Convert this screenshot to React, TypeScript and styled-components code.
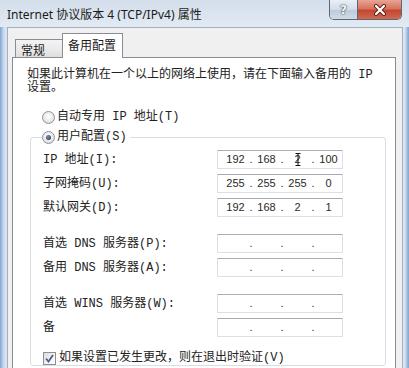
import styled, { createGlobalStyle } from "styled-components";

const SONG = `"Liberation Mono", "Noto Sans CJK SC", monospace`;
const UI = `"Noto Sans", "Noto Sans CJK SC", sans-serif`;
const NUM = `"Liberation Sans", Arial, sans-serif`;

const GlobalStyle = createGlobalStyle`
  html, body {
    margin: 0;
    padding: 0;
    background: #dbe5f1;
  }
  body {
    width: 409px;
    height: 368px;
    overflow: hidden;
  }
`;

const Window = styled.div`
  width: 409px;
  height: 368px;
  display: flex;
  flex-direction: column;
  overflow: hidden;
  background: #dbe5f1;
`;

const TitleBar = styled.div`
  height: 27px;
  flex-shrink: 0;
  display: flex;
  align-items: flex-start;
  padding: 0 7px;
  background: linear-gradient(180deg, #d3deeb 0%, #e2eaf3 100%);
`;

const TitleText = styled.div`
  margin-top: 6px;
  font-family: ${UI};
  font-size: 12px;
  line-height: 18px;
  color: #1b1b1b;
`;

const CaptionButtons = styled.div`
  margin-left: auto;
  display: flex;
  height: 19px;
  border: 1px solid #5d6877;
  border-top: none;
  border-radius: 0 0 5px 5px;
  overflow: hidden;
`;

const HelpButton = styled.div`
  width: 27px;
  display: flex;
  align-items: center;
  justify-content: center;
  border-right: 1px solid #5d6877;
  background: linear-gradient(180deg, #e9eff6 0%, #d2dce8 50%, #bccadb 51%, #d0dbe8 100%);
  font-family: "DejaVu Sans", sans-serif;
  font-weight: bold;
  font-size: 12px;
  color: #f4f6f9;
  text-shadow: 0 0 1px #2c3748, 0 0 2px #3a4658;
`;

const CloseButton = styled.div`
  width: 43px;
  display: flex;
  align-items: center;
  justify-content: center;
  background: linear-gradient(180deg, #e8a597 0%, #d8735f 45%, #c4462f 55%, #d06a52 100%);
`;

const Main = styled.div`
  flex: 1;
  display: flex;
  min-height: 0;
`;

const FrameLeft = styled.div`
  width: 7px;
  flex-shrink: 0;
  background: linear-gradient(90deg, #7fa3cf 0, #a7c3e2 2px, #cfdced 4px, #dce6f1 7px);
`;

const FrameRight = styled.div`
  width: 6px;
  flex-shrink: 0;
  background: linear-gradient(90deg, #e2eaf3 0, #d5e1ef 2px, #a4c0e0 4px, #7fa2cf 6px);
`;

const Body = styled.div`
  flex: 1;
  display: flex;
  flex-direction: column;
  background: #f0f0f0;
  border: 1px solid #a4b0c0;
  border-bottom: none;
  padding: 5px 6px 0 4px;
  min-width: 0;
`;

const TabStrip = styled.div`
  display: flex;
  align-items: flex-end;
  height: 25px;
  padding-left: 3px;
  margin-bottom: -1px;
  position: relative;
  z-index: 1;
`;

const Tab = styled.div<{ $active?: boolean }>`
  box-sizing: border-box;
  font-family: ${UI};
  font-size: 12px;
  color: #1b1b1b;
  border: 1px solid #898c95;
  border-bottom: none;
  display: flex;
  align-items: center;
  ${(p) =>
    p.$active
      ? `
    height: 25px;
    padding: 0 6px 2px 5px;
    background: #fff;
  `
      : `
    height: 18px;
    margin-bottom: 1px;
    padding: 2px 17px 0 5px;
    border-right: none;
    background: linear-gradient(180deg, #f3f3f3 0%, #ebebeb 50%, #dedede 100%);
  `}
`;

const Panel = styled.div`
  flex: 1;
  background: #fff;
  border: 1px solid #898c95;
  border-bottom: none;
  padding: 11px 9px 0 14px;
  font-family: ${SONG};
  font-size: 12px;
  color: #222;
`;

const Description = styled.div`
  line-height: 13px;
`;

const RadioRow = styled.div`
  display: flex;
  align-items: center;
  gap: 2px;
  height: 14px;
  line-height: 14px;
  margin: 15px 0 0 15px;
`;

const Radio = styled.span<{ $on?: boolean }>`
  width: 13px;
  height: 13px;
  box-sizing: border-box;
  flex-shrink: 0;
  border-radius: 50%;
  border: 1px solid #8f9092;
  background: radial-gradient(circle at 50% 40%, #ffffff 0, #e7e7e7 60%, #cfcfcf 100%);
  display: flex;
  align-items: center;
  justify-content: center;
  &::after {
    content: "";
    width: 5px;
    height: 5px;
    border-radius: 50%;
    background: radial-gradient(circle at 40% 35%, #7592b8, #1c304c);
    display: ${(p) => (p.$on ? "block" : "none")};
  }
`;

const GroupBox = styled.fieldset`
  margin: 6px 0 0 3px;
  padding: 6px 12px 0 12px;
  border: 1px solid #d5dfe5;
  border-radius: 3px;
  min-width: 0;
`;

const Legend = styled.legend`
  padding: 0 3px 0 0;
  margin-left: -1px;
  background: #fff;
`;

const LegendRow = styled.div`
  display: flex;
  align-items: center;
  gap: 2px;
  height: 14px;
  line-height: 14px;
`;

const FieldRow = styled.div<{ $spaced?: boolean }>`
  display: flex;
  align-items: center;
  height: 19px;
  margin-top: ${(p) => (p.$spaced ? "17px" : "5px")};
  &:first-of-type {
    margin-top: 0;
  }
`;

const FieldLabel = styled.div`
  width: 174px;
  flex-shrink: 0;
  white-space: nowrap;
  line-height: 14px;
`;

const IpBox = styled.div`
  width: 126px;
  height: 19px;
  box-sizing: border-box;
  display: flex;
  padding-left: 4px;
  border: 1px solid #dcdfe3;
  border-top-color: #abadb3;
  background: #fff;
  font-family: ${NUM};
  font-size: 11px;
  line-height: 17px;
  color: #2a2a2a;
`;

const Segment = styled.span`
  width: 27px;
  text-align: center;
  position: relative;
`;

const Dot = styled.span`
  width: 4px;
  text-align: center;
`;

const Caret = styled.svg`
  position: absolute;
  left: 11px;
  top: 1px;
`;

const CheckRow = styled.div`
  display: flex;
  align-items: center;
  gap: 3px;
  height: 14px;
  line-height: 14px;
  margin-top: 14px;
`;

const CheckBox = styled.span`
  width: 13px;
  height: 13px;
  box-sizing: border-box;
  flex-shrink: 0;
  border: 1px solid #8f8f8f;
  background: linear-gradient(135deg, #dcdcdc 0%, #f4f4f4 60%, #ffffff 100%);
  display: flex;
  align-items: center;
  justify-content: center;
`;

type IpValue = [string, string, string, string];

const IpField = ({ value, caret }: { value?: IpValue; caret?: number }) => {
  const parts = value ?? ["", "", "", ""];
  return (
    <IpBox>
      {parts.map((p, i) => (
        <span key={i} style={{ display: "contents" }}>
          <Segment>
            {p}
            {caret === i && (
              <Caret width="6" height="15" viewBox="0 0 6 15">
                <path d="M0.5 1.5h5M3 1.5v12M0.5 13.5h5" stroke="#111" strokeWidth="1" fill="none" />
              </Caret>
            )}
          </Segment>
          {i < 3 && <Dot>.</Dot>}
        </span>
      ))}
    </IpBox>
  );
};

const rows: { label: string; value?: IpValue; spaced?: boolean; caret?: number }[] = [
  { label: "IP 地址(I):", value: ["192", "168", "2", "100"], caret: 2 },
  { label: "子网掩码(U):", value: ["255", "255", "255", "0"] },
  { label: "默认网关(D):", value: ["192", "168", "2", "1"] },
  { label: "首选 DNS 服务器(P):", spaced: true },
  { label: "备用 DNS 服务器(A):" },
  { label: "首选 WINS 服务器(W):", spaced: true },
  { label: "备" },
];

export default function App() {
  return (
    <>
      <GlobalStyle />
      <Window>
        <TitleBar>
          <TitleText>Internet 协议版本 4 (TCP/IPv4) 属性</TitleText>
          <CaptionButtons>
            <HelpButton>?</HelpButton>
            <CloseButton>
              <svg width="14" height="12" viewBox="0 0 14 12">
                <path d="M3 2L11 10M11 2L3 10" stroke="#5b2016" strokeWidth="4" strokeLinecap="round" />
                <path d="M3 2L11 10M11 2L3 10" stroke="#fff" strokeWidth="2.2" strokeLinecap="round" />
              </svg>
            </CloseButton>
          </CaptionButtons>
        </TitleBar>
        <Main>
          <FrameLeft />
          <Body>
            <TabStrip>
              <Tab>常规</Tab>
              <Tab $active>备用配置</Tab>
            </TabStrip>
            <Panel>
              <Description>
                如果此计算机在一个以上的网络上使用，请在下面输入备用的 IP
                <br />
                设置。
              </Description>
              <RadioRow>
                <Radio />
                自动专用 IP 地址(T)
              </RadioRow>
              <GroupBox>
                <Legend>
                  <LegendRow>
                    <Radio $on />
                    用户配置(S)
                  </LegendRow>
                </Legend>
                {rows.map((r) => (
                  <FieldRow key={r.label} $spaced={r.spaced}>
                    <FieldLabel>{r.label}</FieldLabel>
                    <IpField value={r.value} caret={r.caret} />
                  </FieldRow>
                ))}
                <CheckRow>
                  <CheckBox>
                    <svg width="9" height="9" viewBox="0 0 9 9">
                      <path d="M1 4.5L3.5 7.5L8 1" stroke="#4a5f8e" strokeWidth="1.8" fill="none" />
                    </svg>
                  </CheckBox>
                  如果设置已发生更改，则在退出时验证(V)
                </CheckRow>
              </GroupBox>
            </Panel>
          </Body>
          <FrameRight />
        </Main>
      </Window>
    </>
  );
}
